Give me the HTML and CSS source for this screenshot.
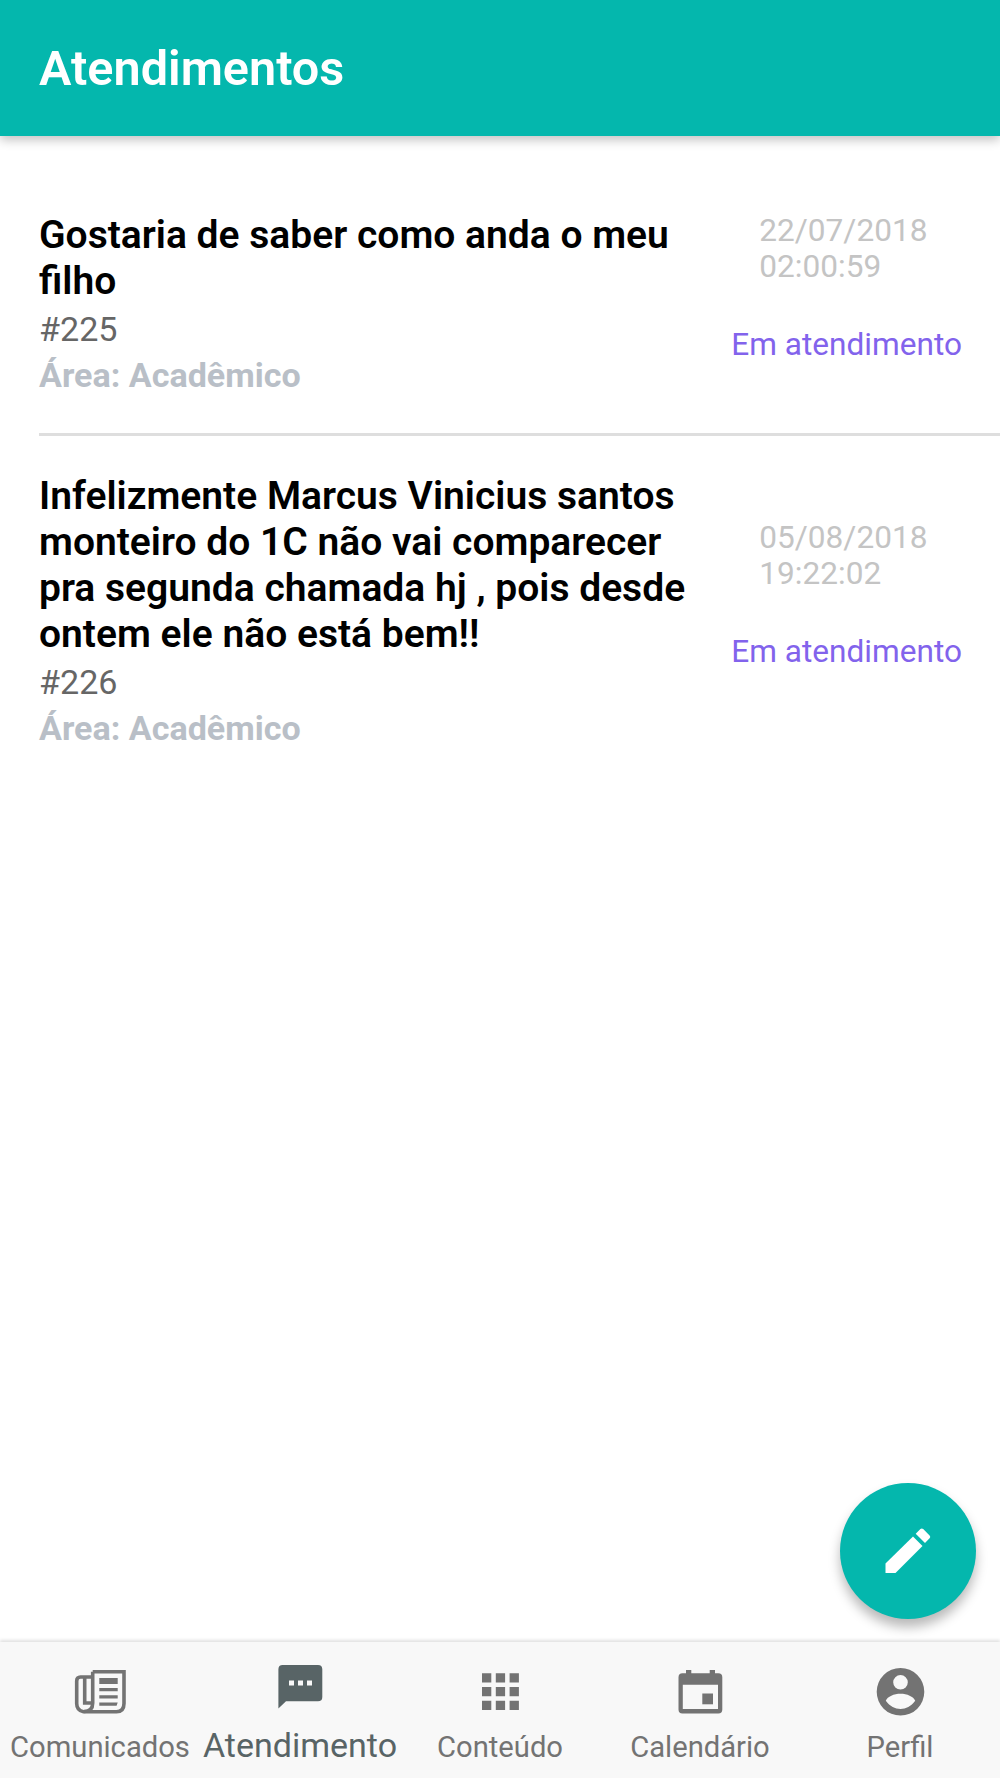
FILE: index.html
```
<!DOCTYPE html>
<html lang="pt-BR">

<head>
    <meta charset="utf-8">
    <title>Atendimentos</title>
    <link rel="stylesheet" href="styles.css">
</head>

<body>
    <header class="toolbar">
        <h1>Atendimentos</h1>
    </header>

    <main class="content">
        <div class="item">
            <div class="item-inner">
                <div class="info">
                    <h2>Gostaria de saber como anda o meu filho</h2>
                    <p class="number">#225</p>
                    <p class="area">Área: Acadêmico</p>
                </div>
                <div class="side">
                    <p class="date">22/07/2018<br>02:00:59</p>
                    <p class="status">Em atendimento</p>
                </div>
            </div>
        </div>
        <div class="item">
            <div class="item-inner">
                <div class="info">
                    <h2>Infelizmente Marcus Vinicius santos monteiro do 1C não vai comparecer pra segunda chamada hj , pois desde ontem ele não está bem!!</h2>
                    <p class="number">#226</p>
                    <p class="area">Área: Acadêmico</p>
                </div>
                <div class="side">
                    <p class="date">05/08/2018<br>19:22:02</p>
                    <p class="status">Em atendimento</p>
                </div>
            </div>
        </div>
    </main>

    <button class="fab" aria-label="Novo atendimento">
        <svg viewBox="0 0 60 60">
            <path d="M7.5 42.5L35 15.5L44.5 25L17.5 52H7.5z" />
            <path d="M37.7 12.8L42.4 8.1Q43.8 6.8 45.2 8.1L51.6 14.5Q53 15.9 51.6 17.3L47 22z" />
        </svg>
    </button>

    <nav class="tabs">
        <a class="tab">
            <svg viewBox="0 0 60 60">
                <g fill="none" stroke="currentColor" stroke-width="3.6">
                    <path d="M22.7 9.7H54V41.5Q54 49.7 46.4 49.7H13.5Q6.7 48.5 6.7 41.5V19Q6.7 15 10.5 15H22.7" />
                    <path d="M22.7 9.7V41Q22.7 49.5 14 49.5" />
                    <path d="M14.7 15V41H22.7" />
                </g>
                <path d="M29.3 16H47.7V22H29.3zM29.3 26H47.7V29.2H29.3zM29.3 33.2H47.7V36.4H29.3zM29.3 40.5H47.7L46.6 43.7H29.3z" />
            </svg>
            <span>Comunicados</span>
        </a>
        <a class="tab active">
            <svg viewBox="0 0 60 60">
                <path fill-rule="evenodd" d="M12.7 3H48Q52.3 3 52.3 7.3V35Q52.3 39.3 48 39.3H16L8.4 46.5V7.3Q8.4 3 12.7 3zM19 18.5V23.5H24V18.5zM28 18.5V23.5H33V18.5zM37 18.5V23.5H42V18.5z" />
            </svg>
            <span>Atendimento</span>
        </a>
        <a class="tab">
            <svg viewBox="0 0 60 60">
                <path d="M12 11.2h9.3v9.3H12zM25.8 11.2h9.3v9.3h-9.3zM39.6 11.2h9.3v9.3h-9.3zM12 25h9.3v9.3H12zM25.8 25h9.3v9.3h-9.3zM39.6 25h9.3v9.3h-9.3zM12 38.8h9.3v9.3H12zM25.8 38.8h9.3v9.3h-9.3zM39.6 38.8h9.3v9.3h-9.3z" />
            </svg>
            <span>Conteúdo</span>
        </a>
        <a class="tab">
            <svg viewBox="0 0 60 60">
                <path fill-rule="evenodd" d="M16 8H21.3V11.3H39.7V8H45V11.3H48.3Q52.3 11.3 52.3 15.3V47.5Q52.3 51.5 48.3 51.5H12.5Q8.5 51.5 8.5 47.5V15.3Q8.5 11.3 12.5 11.3H16zM12.8 22.7V47H48V22.7z" />
                <path d="M32.3 31.5H43V42.3H32.3z" />
            </svg>
            <span>Calendário</span>
        </a>
        <a class="tab">
            <svg viewBox="0 0 60 60">
                <path fill-rule="evenodd" d="M30.5 6A23.8 23.8 0 0 1 30.5 53.6A23.8 23.8 0 0 1 30.5 6zM30.5 13A7.3 7.3 0 0 0 30.5 27.6A7.3 7.3 0 0 0 30.5 13zM15.8 38.8C20 44.5 25 46.9 30.5 46.9C36 46.9 41 44.5 45.2 38.8C43.5 34.5 37 31.8 30.5 31.8C24 31.8 17.5 34.5 15.8 38.8z" />
            </svg>
            <span>Perfil</span>
        </a>
    </nav>
</body>

</html>
```
FILE: styles.css
```
* {
    box-sizing: border-box;
    margin: 0;
    padding: 0;
}

body {
    display: flex;
    flex-direction: column;
    height: 100vh;
    background-color: #fff;
    font-family: Roboto, "Liberation Sans", sans-serif;
    overflow: hidden;
}

.toolbar {
    display: flex;
    align-items: center;
    height: 136px;
    padding: 0 39px;
    background-color: #04b7ad;
    color: #fff;
    box-shadow: 0 4px 10px rgba(0, 0, 0, 0.24);
}

.toolbar h1 {
    font-size: 48.6px;
    font-weight: 600;
}

.content {
    flex: 1;
    padding-top: 39px;
}

.item {
    padding-left: 39px;
}

.item-inner {
    display: flex;
    align-items: center;
    justify-content: space-between;
    padding: 37px 38px 35px 0;
}

.item:not(:last-child) .item-inner {
    border-bottom: 3px solid #dedede;
}

.info {
    width: 660px;
}

.info h2 {
    margin-bottom: 2px;
    font-size: 39.03px;
    font-weight: 600;
    line-height: 46px;
    color: #000;
}

.info p {
    font-size: 34.1px;
    line-height: 46px;
}

.info .number {
    color: #666;
}

.info .area {
    font-weight: bold;
    color: #b9bfc7;
}

.side {
    margin-bottom: 34px;
    white-space: nowrap;
    font-size: 31.6px;
    line-height: 36px;
}

.date {
    margin-left: 28px;
    color: #c4c4c4;
}

.status {
    margin-top: 42px;
    color: #8263ec;
}

.fab {
    position: absolute;
    right: 24px;
    bottom: 159px;
    display: flex;
    align-items: center;
    justify-content: center;
    width: 136px;
    height: 136px;
    border: none;
    border-radius: 50%;
    background-color: #04b7ad;
    box-shadow: 0 8px 12px rgba(0, 0, 0, 0.28);
    cursor: pointer;
}

.fab svg {
    width: 60px;
    height: 60px;
    fill: #fff;
}

.tabs {
    display: flex;
    height: 136px;
    padding-top: 20px;
    background-color: #f8f8f8;
    box-shadow: 0 -2px 3px rgba(0, 0, 0, 0.12);
}

.tab {
    flex: 1 0 200px;
    display: flex;
    flex-direction: column;
    align-items: center;
    color: #737373;
    font-size: 29.2px;
    line-height: 40px;
    white-space: nowrap;
}

.tab svg {
    width: 60px;
    height: 60px;
    margin-bottom: 5px;
    fill: currentColor;
}

.active {
    color: #586466;
}

.active span {
    font-size: 34px;
    line-height: 37px;
}
```
